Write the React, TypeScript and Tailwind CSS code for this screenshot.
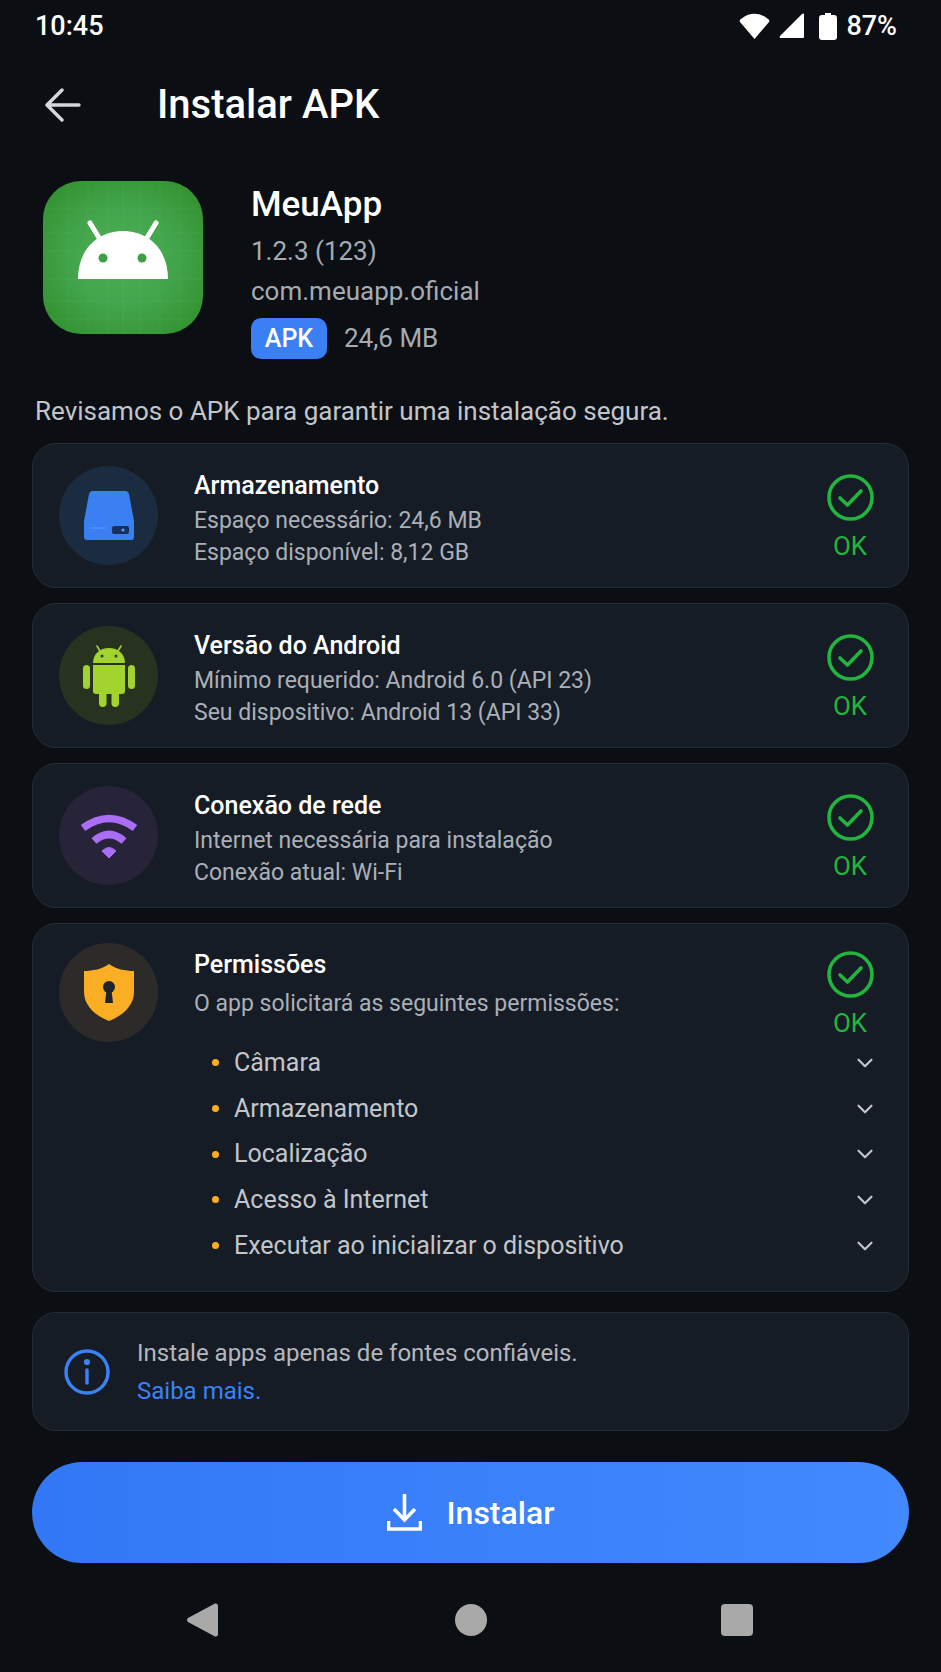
import { ChevronDown } from "lucide-react";
import type { ReactNode } from "react";

function AppIcon() {
  const xs = [25, 45, 65, 80, 97, 117, 137];
  const ys = [28, 52, 70, 98, 120, 138];
  return (
    <svg width="160" height="153" viewBox="0 0 160 153" className="shrink-0">
      <defs>
        <radialGradient id="appGlow" cx="50%" cy="50%" r="60%">
          <stop offset="0%" stopColor="#4caf55" />
          <stop offset="55%" stopColor="#42a44b" />
          <stop offset="100%" stopColor="#349432" />
        </radialGradient>
        <clipPath id="appClip">
          <rect width="160" height="153" rx="38" />
        </clipPath>
      </defs>
      <g clipPath="url(#appClip)">
        <rect width="160" height="153" fill="url(#appGlow)" />
        {xs.map((x) => (
          <line key={x} x1={x} y1="0" x2={x} y2="153" stroke="#ffffff" strokeOpacity="0.05" />
        ))}
        {ys.map((y) => (
          <line key={y} x1="0" y1={y} x2="160" y2={y} stroke="#ffffff" strokeOpacity="0.05" />
        ))}
      </g>
      <path d="M47 42 L58 60 M113 42 L102 60" stroke="#fff" strokeWidth="5" strokeLinecap="round" />
      <path d="M35 98 C35 68 55 50 80 50 C105 50 125 68 125 98 Z" fill="#fff" />
      <circle cx="60" cy="77" r="4.5" fill="#3f9f48" />
      <circle cx="99" cy="77" r="4.5" fill="#3f9f48" />
    </svg>
  );
}

function DiskIcon() {
  return (
    <svg width="50" height="49" viewBox="0 0 50 49">
      <path d="M9 0 H41 Q44 0 45 3 L50 30 V46 Q50 49 47 49 H3 Q0 49 0 46 V30 L5 3 Q6 0 9 0Z" fill="#3a80f2" />
      <rect x="28" y="35" width="17" height="8" rx="2" fill="#17305c" />
      <circle cx="39" cy="39" r="1.6" fill="#5b9cff" />
      <rect x="6" y="36" width="16" height="2" fill="#5b9cff" fillOpacity="0.5" />
    </svg>
  );
}

function RobotIcon() {
  return (
    <svg width="52" height="62" viewBox="0 0 52 62" fill="#a2d32e">
      <path d="M14 1 L17 6 M38 1 L35 6" stroke="#a2d32e" strokeWidth="1.6" strokeLinecap="round" />
      <path d="M10 18 C10 9 17 3 26 3 C35 3 42 9 42 18 Z" />
      <circle cx="19" cy="11" r="1.5" fill="#2c3a24" />
      <circle cx="33" cy="11" r="1.5" fill="#2c3a24" />
      <rect x="0" y="20" width="7" height="24" rx="3.5" />
      <rect x="45" y="20" width="7" height="24" rx="3.5" />
      <path d="M10 20 H42 V46 Q42 49 39 49 H13 Q10 49 10 46 Z" />
      <rect x="16" y="44" width="7.5" height="18" rx="3.7" />
      <rect x="28.5" y="44" width="7.5" height="18" rx="3.7" />
    </svg>
  );
}

function WifiIcon() {
  return (
    <svg width="58" height="46" viewBox="0 0 58 46" fill="none" stroke="#a96ef5" strokeWidth="7.5">
      <path d="M3 15 Q29 -4 55 15" />
      <path d="M14 28 Q29 15 44 28" />
      <path d="M22 38 Q29 31 36 38 L29 45 Z" fill="#a96ef5" strokeWidth="1" strokeLinejoin="round" />
    </svg>
  );
}

function ShieldIcon() {
  return (
    <svg width="50" height="57" viewBox="0 0 50 57">
      <path d="M25 0 C32 5 41 7 50 7 V28 C50 42 38 52 25 57 C12 52 0 42 0 28 V7 C9 7 18 5 25 0Z" fill="#fbad24" />
      <circle cx="25" cy="23" r="6" fill="#1f242b" />
      <path d="M22.5 26 H27.5 L29 39 H21 Z" fill="#1f242b" />
    </svg>
  );
}

function CheckBadge() {
  return (
    <div className="flex w-[60px] flex-col items-center">
      <svg width="47" height="47" viewBox="0 0 47 47" fill="none" stroke="#22b53e">
        <circle cx="23.5" cy="23.5" r="21.5" strokeWidth="3.6" />
        <path d="M13 24 L20.5 31 L34 17" strokeWidth="3.6" strokeLinecap="round" strokeLinejoin="round" />
      </svg>
      <span className="mt-[9px] text-[26px] leading-[32px] text-[#22b53e]">OK</span>
    </div>
  );
}

function IconCircle({ bg, children }: { bg: string; children: ReactNode }) {
  return (
    <div className={`flex h-[99px] w-[99px] shrink-0 items-center justify-center rounded-full ${bg}`}>
      {children}
    </div>
  );
}

function CheckCard(props: { bg: string; icon: ReactNode; title: string; lines: string[] }) {
  return (
    <div className="flex h-[145px] items-start rounded-[24px] border border-[#262d38] bg-[#161c25] pl-[26px] pr-[28px] pt-[22px]">
      <IconCircle bg={props.bg}>{props.icon}</IconCircle>
      <div className="ml-[36px] flex-1 pt-[4px]">
        <div className="text-[25px] font-medium leading-[32px] text-white">{props.title}</div>
        <div className="mt-[3px] text-[23px] leading-[32px] text-[#aab0b8]">
          {props.lines.map((l) => (
            <div key={l}>{l}</div>
          ))}
        </div>
      </div>
      <div className="pt-[8px]">
        <CheckBadge />
      </div>
    </div>
  );
}

const permissions = ["Câmara", "Armazenamento", "Localização", "Acesso à Internet", "Executar ao inicializar o dispositivo"];

export default function App() {
  return (
    <div className="h-[1672px] w-[941px] overflow-hidden bg-[#0b0f14] font-['Roboto',sans-serif] text-white">
      {/* status bar */}
      <div className="flex h-[52px] items-center justify-between pl-[35px] pr-[44px]">
        <span className="text-[27px] font-medium">10:45</span>
        <div className="flex items-center">
          <svg width="31" height="26" viewBox="0 0 31 26" fill="#fff">
            <path d="M15.5 26 L1 9 Q0 7 2 6 C10 -1 21 -1 29 6 Q31 7 30 9 Z" strokeLinejoin="round" />
          </svg>
          <svg width="26" height="26" viewBox="0 0 26 26" fill="#fff" className="ml-[9px]">
            <path d="M25 1 V24 Q25 25 24 25 H2 Q0 25 1 23 L23 1 Q25 0 25 1Z" />
          </svg>
          <svg width="18" height="27" viewBox="0 0 18 27" fill="#fff" className="ml-[14px]">
            <path d="M6 0 H12 V2 H15 Q18 2 18 5 V24 Q18 27 15 27 H3 Q0 27 0 24 V5 Q0 2 3 2 H6Z" />
          </svg>
          <span className="ml-[9px] text-[27px] font-medium">87%</span>
        </div>
      </div>

      {/* app bar */}
      <div className="mt-[27px] flex h-[52px] items-center pl-[45px]">
        <svg width="36" height="34" viewBox="0 0 36 34" fill="none" stroke="#d5d7da" strokeWidth="3.4" strokeLinecap="round" strokeLinejoin="round">
          <path d="M34 17 H3 M17 2 L2 17 L17 32" />
        </svg>
        <h1 className="ml-[76px] text-[40px] font-medium leading-[52px]">Instalar APK</h1>
      </div>

      {/* app summary */}
      <div className="mt-[50px] flex pl-[43px]">
        <AppIcon />
        <div className="ml-[48px]">
          <div className="mt-[2px] text-[35px] font-medium leading-[44px]">MeuApp</div>
          <div className="mt-[4px] text-[26px] leading-[40px] text-[#a5abb3]">1.2.3 (123)</div>
          <div className="text-[26px] leading-[40px] text-[#a5abb3]">com.meuapp.oficial</div>
          <div className="mt-[7px] flex items-center">
            <span className="flex h-[41px] w-[76px] items-center justify-center rounded-[10px] bg-[#3b7ff5] text-[25px] font-medium">APK</span>
            <span className="ml-[17px] text-[26px] text-[#a5abb3]">24,6 MB</span>
          </div>
        </div>
      </div>

      <p className="mt-[34px] pl-[35px] text-[26px] leading-[36px] text-[#c2c6cb]">Revisamos o APK para garantir uma instalação segura.</p>

      {/* checks */}
      <div className="mt-[14px] flex flex-col gap-[15px] px-[32px]">
        <CheckCard bg="bg-[#1b2c40]" icon={<DiskIcon />} title="Armazenamento" lines={["Espaço necessário: 24,6 MB", "Espaço disponível: 8,12 GB"]} />
        <CheckCard bg="bg-[#27331f]" icon={<RobotIcon />} title="Versão do Android" lines={["Mínimo requerido: Android 6.0 (API 23)", "Seu dispositivo: Android 13 (API 33)"]} />
        <CheckCard bg="bg-[#27243a]" icon={<WifiIcon />} title="Conexão de rede" lines={["Internet necessária para instalação", "Conexão atual: Wi-Fi"]} />

        <div className="h-[369px] rounded-[24px] border border-[#262d38] bg-[#161c25] pl-[26px] pr-[28px] pt-[19px]">
          <div className="flex items-start">
            <IconCircle bg="bg-[#2c2b2a]">
              <ShieldIcon />
            </IconCircle>
            <div className="ml-[36px] flex-1">
              <div className="mt-[6px] text-[25px] font-medium leading-[32px] text-white">Permissões</div>
              <div className="mt-[7px] text-[23px] leading-[32px] text-[#aab0b8]">O app solicitará as seguintes permissões:</div>
            </div>
            <div className="pt-[8px]">
              <CheckBadge />
            </div>
          </div>
          <ul className="-mt-[2px] pl-[153px]">
            {permissions.map((p) => (
              <li key={p} className="flex h-[45.7px] items-center text-[25px] text-[#c2c6cb]">
                <span className="mr-[15px] h-[7px] w-[7px] rounded-full bg-[#fbad24]" />
                <span className="flex-1">{p}</span>
                <ChevronDown size={26} strokeWidth={2} className="mr-[2px] text-[#c2c6cb]" />
              </li>
            ))}
          </ul>
        </div>

        <div className="mt-[5px] flex h-[119px] items-center rounded-[24px] border border-[#262d38] bg-[#161c25] pl-[31px]">
          <svg width="46" height="46" viewBox="0 0 46 46" fill="none" stroke="#3b82f6" strokeWidth="3.4" strokeLinecap="round">
            <circle cx="23" cy="23" r="21" />
            <path d="M23 21 V34" />
            <circle cx="23" cy="13" r="1.4" fill="#3b82f6" />
          </svg>
          <div className="ml-[27px] text-[24px] leading-[38px]">
            <div className="text-[#b4b8bd]">Instale apps apenas de fontes confiáveis.</div>
            <div className="text-[#3b82f6]">Saiba mais.</div>
          </div>
        </div>

        <button type="button" className="mt-[16px] flex h-[101px] items-center justify-center gap-[25px] rounded-full bg-gradient-to-r from-[#3278f6] to-[#4289fe]">
          <svg width="35" height="37" viewBox="0 0 35 37" fill="none" stroke="#fff" strokeWidth="3.6">
            <path d="M17.5 0 V24 M7 15 L17.5 26 L28 15" />
            <path d="M1.5 27 V35 H33.5 V27" />
          </svg>
          <span className="text-[32px] font-medium text-white">Instalar</span>
        </button>
      </div>

      {/* nav bar */}
      <div className="mt-[40px] flex items-center pl-[187px]">
        <svg width="31" height="34" viewBox="0 0 31 34" fill="#a9a9a9">
          <path d="M28 0.5 Q31 0 31 3 V31 Q31 34 28 33.5 L1 19 Q-1 17 1 15 Z" />
        </svg>
        <div className="ml-[237px] h-[32px] w-[32px] rounded-full bg-[#a9a9a9]" />
        <div className="ml-[234px] h-[32px] w-[32px] rounded-[4px] bg-[#a9a9a9]" />
      </div>
    </div>
  );
}
